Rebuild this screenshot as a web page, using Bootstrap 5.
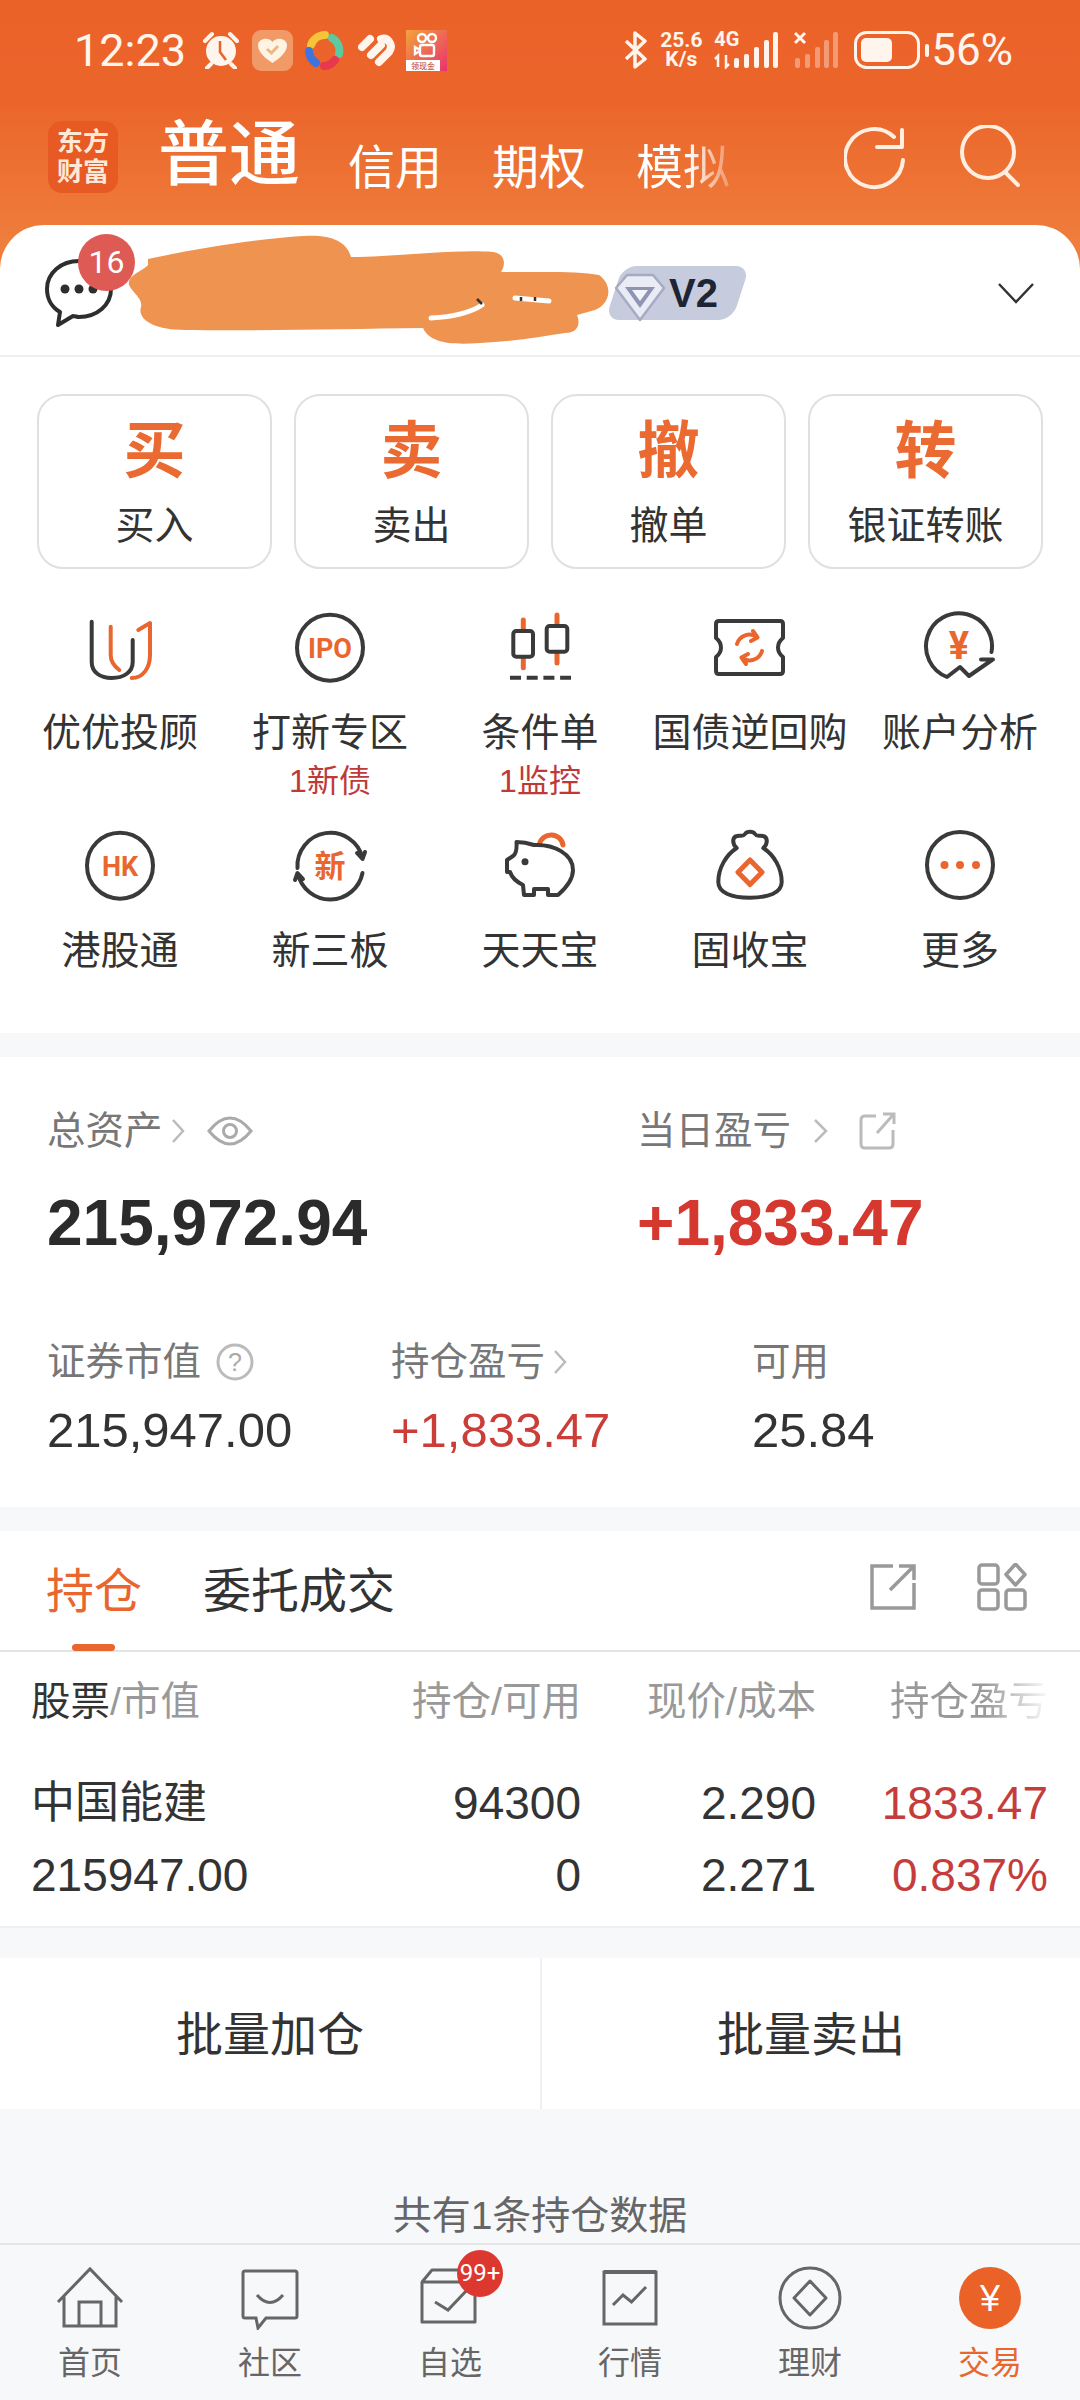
<!doctype html>
<html lang="zh-CN">
<head>
  <meta charset="utf-8">
  <title>东方财富 交易</title>
  <meta name="viewport" content="width=device-width, initial-scale=1">
  <link href="https://cdn.jsdelivr.net/npm/bootstrap@5.3.0/dist/css/bootstrap.min.css" rel="stylesheet">
  <style>
    :root { --brand: #E9672F; --ink: #333; --soft: #777; --faint: #999; --up: #D5382F; --band: #F7F8FA; }
    html, body { width: 1080px; height: 2400px; overflow: hidden; }
    body { background: var(--band); color: var(--ink); font-family: "Liberation Sans", "Noto Sans CJK SC", sans-serif; }
    svg { display: block; flex: none; }
    .ink-line { fill: none; stroke: #3a3a3a; stroke-width: 4; stroke-linecap: round; stroke-linejoin: round; }
    .ink-solid { fill: #fff; }
    .brand-line { fill: none; stroke: var(--brand); stroke-width: 5; stroke-linecap: round; stroke-linejoin: round; }
    .brand-thin { stroke-width: 4; }
    .brand-text { fill: var(--brand); font-family: Roboto, "Noto Sans CJK SC", sans-serif; font-weight: 700; text-anchor: middle; }

    .top-wrap { background: linear-gradient(180deg, #EB6229 0, #EB652B 100px, #EF7D3B 240px); }
    .status-row { height: 100px; padding-left: 74px; padding-right: 67px; color: #FFF5EC; font-family: Roboto, sans-serif; }
    .clock { font-size: 45px; line-height: 1; width: 112px; }
    .speed { font-size: 21px; font-weight: 700; line-height: 19px; text-align: center; width: 50px; }
    .net-wrap { width: 64px; height: 38px; }
    .net-type { left: 0; top: -2px; font-size: 20px; line-height: 20px; font-weight: 700; }
    .pct { font-size: 44px; line-height: 1; margin-left: 2px; }
    .gap-tile { margin-left: 12px; }
    .gap-wheel { margin-left: 11px; }
    .gap-heart { margin-left: 14px; }
    .gap-ks { margin-left: 10px; }
    .nav-row { height: 125px; padding-left: 48px; color: #fff; }
    .logo-tile { width: 70px; height: 72px; margin-top: 21px; border-radius: 14px; background: #E85A24; color: #FFE9D6; font-size: 26px; line-height: 30px; font-weight: 700; text-align: center; padding-top: 6px; }
    .tab-main { font-size: 71px; line-height: 70px; margin: 20px 0 0 40px; font-weight: 500; }
    .tab-sub { font-size: 47px; line-height: 47px; margin: 44px 0 0 50px; }
    .tab-first { margin-left: 48px; }
    .tab-fade { background: linear-gradient(90deg, #fff 55%, rgba(255,255,255,.25) 100%); -webkit-background-clip: text; background-clip: text; color: transparent; }
    .top-actions { margin: 25px 60px 0 auto; gap: 52px; }

    .acct-row { height: 132px; background: #fff; border-radius: 44px 44px 0 0; border-bottom: 2px solid #EEEFF1; padding: 0 45px; }
    .chat-icon { margin-top: 6px; }
    .drop-icon { margin-top: 6px; }
    .msg-dot { top: 9px; left: 78px; width: 57px; height: 57px; background: #DD5A55; color: #fff; font-size: 32px; font-family: Roboto, sans-serif; line-height: 57px; text-align: center; border-radius: 50%; }
    .scribble { top: 0; left: 125px; }
    .vip-tag { position: relative; margin-left: 493px; margin-top: 6px; width: 135px; height: 54px; }
    .vip-bg { background: #C6CCDE; transform: skewX(-18deg); border-radius: 14px; inset: 0 0 0 8px; }
    .vip-gem { left: 8px; top: 6px; }
    .vip-text { left: 63px; top: 5px; font-size: 40px; line-height: 44px; font-weight: 700; color: #1D2433; font-family: "Liberation Sans", sans-serif; }

    .panel-main { background: #fff; height: 676px; padding-top: 37px; }
    .trade-row { padding: 0 37px; gap: 22px; }
    .trade-tile { width: 235px; height: 175px; border: 2px solid #E0E0E0; border-radius: 26px; text-align: center; padding-top: 26px; }
    .trade-big { font-size: 62px; line-height: 60px; font-weight: 700; color: #EA6A31; }
    .trade-label { font-size: 39px; line-height: 42px; margin-top: 23px; color: #333; white-space: nowrap; }
    .shortcut-rows { margin: 41px 15px 0; }
    .shortcut { height: 218px; text-align: center; }
    .shortcut-last { height: 205px; }
    .shortcut-label { font-size: 39px; line-height: 40px; margin-top: 27px; color: #333; white-space: nowrap; }
    .shortcut-note { font-size: 32px; line-height: 36px; margin-top: 10px; color: #BE3A38; }

    .panel-assets { margin-top: 24px; background: #fff; height: 450px; padding: 52px 0 0 47px; }
    .asset-label { font-size: 38.500px; line-height: 44px; color: var(--soft); gap: 7px; }
    .asset-total { font-size: 64px; line-height: 70px; font-weight: 700; margin-top: 35px; color: #2B2B2B; }
    .asset-up { color: var(--up); }
    .asset-col-a { width: 590px; }
    .asset-sub-a { width: 344px; }
    .asset-sub-b { width: 361px; }
    .asset-second { margin-top: 82px; }
    .asset-num { font-size: 49px; line-height: 56px; margin-top: 18px; color: #333; }
    .asset-num.asset-up { color: #CB3D38; }
    .gap-eye { margin-left: 14px; }
    .gap-more { margin-left: 14px; }
    .gap-link { margin-left: 22px; }

    .panel-hold { margin-top: 24px; background: #fff; height: 397px; border-bottom: 2px solid #EEEFF1; }
    .hold-tabs { height: 121px; border-bottom: 2px solid #E4E4E6; padding: 35px 53px 0 46px; position: relative; }
    .hold-tab { font-size: 48px; line-height: 52px; }
    .hold-tab-on { color: var(--brand); margin-right: 61px; }
    .hold-bar { left: 72px; bottom: -1px; width: 43px; height: 7px; border-radius: 4px; background: var(--brand); }
    .hold-tools { gap: 60px; margin-top: -3px; }
    .data-row { padding-left: 31px; }
    .cell-a { width: 300px; }
    .cell-b { width: 250px; text-align: right; }
    .cell-c { width: 235px; text-align: right; }
    .cell-d { width: 232px; text-align: right; }
    .head-row { margin-top: 27px; font-size: 39.500px; line-height: 44px; color: var(--faint); }
    .head-dark { color: #333; }
    .head-fade { background: linear-gradient(90deg, #999 60%, rgba(153,153,153,.05) 100%); -webkit-background-clip: text; background-clip: text; color: transparent; }
    .pos-row { font-size: 46px; line-height: 54px; color: #333; }
    .pos-row-one { margin-top: 53px; }
    .pos-row-two { margin-top: 18px; }
    .pos-name { font-size: 44px; }
    .pos-gain { color: #C43D3C; }

    .bulk-row { margin-top: 30px; height: 151px; background: #fff; }
    .bulk-btn { width: 540px; font-size: 47px; line-height: 154px; text-align: center; color: #333; }
    .bulk-btn + .bulk-btn { border-left: 2px solid #F0F0F2; }
    .count-note { height: 134px; padding-top: 85px; font-size: 39px; line-height: 44px; text-align: center; color: #666; }

    .tabbar { height: 157px; border-top: 2px solid #E4E5E8; background: var(--band); }
    .tabbar-item { width: 180px; padding-top: 21px; text-align: center; color: #666; font-size: 32px; line-height: 36px; position: relative; }
    .tabbar-item svg { margin: 0 auto 15px; }
    .tabbar-on { color: var(--brand); }
    .tabbar-dot { top: 5px; left: 97px; width: 46px; height: 47px; border-radius: 50%; background: #DC382F; color: #fff; font-size: 24px; line-height: 47px; font-family: Roboto, sans-serif; }
  </style>
</head>
<body>
<div class="d-flex flex-column">

  <div class="top-wrap">
    <!-- status bar -->
    <div class="status-row d-flex align-items-center">
      <span class="clock">12:23</span>
      <svg class="ms-3" width="38" height="38" viewBox="0 0 38 38"><path d="M3 10 L10 3 M35 10 L28 3 M9 33 L5 37 M29 33 L33 37" stroke="#FFF5EC" stroke-width="4" stroke-linecap="round"/><circle cx="19" cy="20" r="15" fill="#FFF5EC"/><path d="M18 10 V21 L24 29" fill="none" stroke="#EB632A" stroke-width="2.500"/></svg>
      <svg class="gap-tile" width="41" height="41" viewBox="0 0 41 41"><rect width="41" height="41" rx="9" fill="#F19A67"/><path d="M20.500 33 C8 25 6 19 6 15 C6 9 16 6 20.500 12 C25 6 35 9 35 15 C35 19 33 25 20.500 33Z" fill="#FFF3E4"/><path d="M15 19 L19.500 23 L26 16" fill="none" stroke="#E9B884" stroke-width="3"/></svg>
      <svg class="gap-wheel" width="40" height="40" viewBox="0 0 40 40"><g fill="none" stroke-width="8" stroke-linecap="round"><path d="M7 15 A15 15 0 0 1 21 5" stroke="#F6C438"/><path d="M28 8 A15 15 0 0 1 35 24" stroke="#5CC9A0"/><path d="M31 30 A15 15 0 0 1 20 36" stroke="#E8374F"/><path d="M12 33 A15 15 0 0 1 5 21" stroke="#3F73DE"/></g></svg>
      <svg class="gap-heart" width="38" height="34" viewBox="0 0 38 34"><g fill="none" stroke="#FFF5EC" stroke-width="8" stroke-linecap="round"><path d="M4 14 L12 6"/><path d="M13 22 L23 12"/><path d="M21 29 L31 19 C36 12 30 4 23 6"/></g></svg>
      <svg class="gap-ks" width="41" height="41" viewBox="0 0 41 41"><defs><linearGradient id="ksBg" x1="0" y1="0" x2="1" y2="1"><stop offset="0" stop-color="#F3A33A"/><stop offset="1" stop-color="#E8336E"/></linearGradient></defs><rect width="41" height="41" fill="url(#ksBg)"/><g fill="none" stroke="#fff" stroke-width="2.400"><circle cx="16" cy="8" r="4"/><circle cx="26" cy="8" r="4"/><rect x="14" y="15" width="14" height="11" rx="2"/><path d="M14 20 L9 17 V24 L14 21"/></g><rect y="30" width="34" height="11" fill="#fff"/><text x="17" y="38.500" font-size="8" fill="#B5322A" text-anchor="middle" font-family="Noto Sans CJK SC">领现金</text></svg>

      <svg class="ms-auto" width="24" height="38" viewBox="0 0 24 38"><path d="M2 10 L21 28 L11 36 V2 L21 10 L2 28" fill="none" stroke="#FFF5EC" stroke-width="3.500" stroke-linejoin="round"/></svg>
      <div class="speed ms-2">25.6<br>K/s</div>
      <div class="net-wrap position-relative ms-2">
        <span class="net-type position-absolute">4G</span>
        <svg width="64" height="38" viewBox="0 0 64 38"><path d="M4 36 V25 L1 28 M12 24 V36 L15 33" fill="none" stroke="#FFF5EC" stroke-width="2.500"/><g fill="#FFF5EC"><rect x="20" y="27" width="5" height="10" rx="2"/><rect x="30" y="23" width="5" height="14" rx="2"/><rect x="40" y="16" width="5" height="21" rx="2"/><rect x="50" y="9" width="5" height="28" rx="2"/><rect x="59" y="1" width="5" height="36" rx="2"/></g></svg>
      </div>
      <svg class="ms-3" width="44" height="38" viewBox="0 0 44 38"><path d="M1 2 L11 12 M11 2 L1 12" stroke="#FFF5EC" stroke-width="3"/><g fill="#FFF5EC" opacity=".38"><rect x="1" y="27" width="5" height="10" rx="2"/><rect x="11" y="23" width="5" height="14" rx="2"/><rect x="21" y="16" width="5" height="21" rx="2"/><rect x="30" y="9" width="5" height="28" rx="2"/><rect x="39" y="1" width="5" height="36" rx="2"/></g></svg>
      <svg class="ms-3" width="75" height="38" viewBox="0 0 75 38"><rect x="1.500" y="1.500" width="63" height="35" rx="11" fill="none" stroke="#FFF5EC" stroke-width="3"/><rect x="7" y="7" width="31" height="24" rx="5" fill="#FFF5EC"/><rect x="71" y="13" width="4" height="13" rx="2" fill="#FFF5EC"/></svg>
      <span class="pct">56%</span>
    </div>

    <!-- account type tabs -->
    <div class="nav-row d-flex align-items-start">
      <div class="logo-tile">东方<br>财富</div>
      <span class="tab-main">普通</span>
      <span class="tab-sub tab-first">信用</span>
      <span class="tab-sub">期权</span>
      <span class="tab-sub tab-fade">模拟</span>
      <div class="top-actions d-flex">
        <svg width="62" height="66" viewBox="0 0 62 66"><path d="M50 12 A29 29 0 1 0 59 35" fill="none" stroke="#FFEFE2" stroke-width="4" stroke-linecap="round"/><path d="M33 22 H58 V5" fill="none" stroke="#FFEFE2" stroke-width="4" stroke-linecap="round" stroke-linejoin="round"/></svg>
        <svg width="62" height="66" viewBox="0 0 62 66"><circle cx="30" cy="27" r="26" fill="none" stroke="#FFEFE2" stroke-width="4"/><path d="M47 47 L60 60" stroke="#FFEFE2" stroke-width="4" stroke-linecap="round"/></svg>
      </div>
    </div>

    <!-- account row -->
    <div class="acct-row position-relative d-flex align-items-center">
      <svg class="chat-icon" width="68" height="68" viewBox="0 0 68 68"><path d="M34 2 C16 2 2 14 2 30 C2 41 8 49 15 53 L13 66 L28 57 C30 57 32 58 34 58 C52 58 66 46 66 30 C66 14 52 2 34 2Z" fill="#fff" stroke="#2E2E2E" stroke-width="4" stroke-linejoin="round"/><g fill="#2E2E2E"><circle cx="20" cy="30" r="4.500"/><circle cx="34" cy="30" r="4.500"/><circle cx="48" cy="30" r="4.500"/></g></svg>
      <span class="msg-dot position-absolute">16</span>
      <div class="vip-tag">
        <div class="vip-bg position-absolute"></div>
        <svg class="vip-gem position-absolute" width="52" height="50" viewBox="0 0 52 50"><path d="M13 3 H39 L50 16 L26 48 L2 16Z" fill="#E9ECF5" stroke="#A6ABC4" stroke-width="2.500" stroke-linejoin="round"/><path d="M11 15 H41 L26 36Z" fill="#8F94B3"/><path d="M18 18 H34 L26 29Z" fill="#F2F4FA"/></svg>
        <span class="vip-text position-absolute">V2</span>
      </div>
      <svg class="drop-icon ms-auto" width="38" height="22" viewBox="0 0 38 22"><path d="M2 2 L19 20 L36 2" fill="none" stroke="#333" stroke-width="2.500"/></svg>
      <!-- name scribbled over in the original -->
      <svg class="scribble position-absolute" width="490" height="124" viewBox="0 0 490 124"><path d="M23 34 C70 24 130 14 178 11 C205 9 222 16 226 32 C270 32 330 24 368 27 C382 29 380 42 376 47 C420 47 455 46 474 50 C488 60 486 78 470 85 L452 90 C456 100 452 108 440 108 C415 112 385 117 355 118 C325 120 305 118 298 103 C220 104 130 106 60 105 C30 105 12 95 16 82 C18 74 8 68 4 60 C2 50 18 46 23 40Z" fill="#EF9450"/><path d="M306 93 C325 92 345 88 357 80 M390 73 L424 76" fill="none" stroke="#fff" stroke-width="5" stroke-linecap="round"/><path d="M357 79 L352 74 M396 72 V76 M410 72 V76" fill="none" stroke="#333" stroke-width="2.500"/></svg>
    </div>
  </div>

  <div class="panel-main">
    <div class="trade-row d-flex">
      <div class="trade-tile"><div class="trade-big">买</div><div class="trade-label">买入</div></div>
      <div class="trade-tile"><div class="trade-big">卖</div><div class="trade-label">卖出</div></div>
      <div class="trade-tile"><div class="trade-big">撤</div><div class="trade-label">撤单</div></div>
      <div class="trade-tile"><div class="trade-big">转</div><div class="trade-label">银证转账</div></div>
    </div>

    <div class="shortcut-rows row row-cols-5 g-0">
      <div class="col shortcut">
        <svg class="mx-auto" width="80" height="76" viewBox="0 0 80 76"><path class="ink-line" d="M11.700 11.700 V52 C11.700 62 20 68 31.700 68 C44 68 52.700 62 52.700 52 V30"/><path class="brand-line brand-thin" d="M30.700 16.700 V45 C30.700 51 34 56 39.300 60 M58.300 20 L70 13 V45 C70 58 63 68 51.700 68"/></svg>
        <div class="shortcut-label">优优投顾</div>
      </div>
      <div class="col shortcut">
        <svg class="mx-auto" width="80" height="76" viewBox="0 0 80 76"><circle class="ink-line" cx="40" cy="37.700" r="33"/><text class="brand-text" x="40" y="47.500" font-size="27">IPO</text></svg>
        <div class="shortcut-label">打新专区</div>
        <div class="shortcut-note">1新债</div>
      </div>
      <div class="col shortcut">
        <svg class="mx-auto" width="80" height="76" viewBox="0 0 80 76"><path class="brand-line" d="M23.300 10 V57.700 M57 5 V53"/><rect x="13.300" y="21" width="19.700" height="25.700" rx="3" fill="#fff" stroke="#3a3a3a" stroke-width="4"/><rect x="46.700" y="16" width="20.600" height="25.700" rx="3" fill="#fff" stroke="#3a3a3a" stroke-width="4"/><path d="M10 67.700 H71" fill="none" stroke="#3a3a3a" stroke-width="4" stroke-dasharray="11 5.700"/></svg>
        <div class="shortcut-label">条件单</div>
        <div class="shortcut-note">1监控</div>
      </div>
      <div class="col shortcut">
        <svg class="mx-auto" width="80" height="76" viewBox="0 0 80 76"><path class="ink-line" d="M9 11 H70 Q73 11 73 14 V28 Q68 32 68 37.500 Q68 43 73 47 V61 Q73 64 70 64 H9 Q6 64 6 61 V47 Q11 43 11 37.500 Q11 32 6 28 V14 Q6 11 9 11Z"/><path class="brand-line brand-thin" d="M27 34 A13 13 0 0 1 47 27 M52 41 A13 13 0 0 1 32 48 M43 21 L47.500 27.500 L41 31 M36 54 L31.500 47.500 L38 44"/></svg>
        <div class="shortcut-label">国债逆回购</div>
      </div>
      <div class="col shortcut">
        <svg class="mx-auto" width="80" height="76" viewBox="0 0 80 76"><path class="ink-line" d="M71.500 42 A33 33 0 1 0 27 67 L40 57 L49 66 L72 50 M61 49.500 H73"/><text class="brand-text" x="39" y="49" font-size="38">¥</text></svg>
        <div class="shortcut-label">账户分析</div>
      </div>

      <div class="col shortcut shortcut-last">
        <svg class="mx-auto" width="80" height="76" viewBox="0 0 80 76"><circle class="ink-line" cx="40" cy="37.700" r="33"/><text class="brand-text" x="40" y="47.500" font-size="27">HK</text></svg>
        <div class="shortcut-label">港股通</div>
      </div>
      <div class="col shortcut shortcut-last">
        <svg class="mx-auto" width="80" height="76" viewBox="0 0 80 76"><path class="ink-line" d="M7.500 40 A33 33 0 0 1 72.500 30 M72.500 45 A33 33 0 0 1 8 46 M67 25 L72.500 31 L75 24 M13 51 L7.500 45 L5 52"/><text class="brand-text" x="40" y="49" font-size="31">新</text></svg>
        <div class="shortcut-label">新三板</div>
      </div>
      <div class="col shortcut shortcut-last">
        <svg class="mx-auto" width="80" height="76" viewBox="0 0 80 76"><path class="brand-line" d="M39.500 16 A12 12 0 0 1 63 17"/><path class="ink-line ink-solid" d="M16.500 14 C22 14 28 15 34 17 C54 16 73 26 73 42 C73 52 66 60 58 67 H48 V61 H34 V67 H24 L23 57 C17 54 12 50 10 44 H7 V32 L13 28 C16 26 17 22 16.500 14Z"/><circle cx="25" cy="33.700" r="3.500" fill="#3a3a3a"/></svg>
        <div class="shortcut-label">天天宝</div>
      </div>
      <div class="col shortcut shortcut-last">
        <svg class="mx-auto" width="80" height="76" viewBox="0 0 80 76"><path class="ink-line" d="M26.700 20 C16 27 8.300 40 8.300 54 C8.300 65 22 69.700 40 69.700 C58 69.700 71.700 65 71.700 54 C71.700 40 64 27 53.300 20 C58 16 58 9 53 8 C49 7 47 9 45 6 C43 3 37 3 35 6 C33 9 31 7 27 8 C22 9 22 16 26.700 20Z"/><polygon class="brand-line" points="40,32 52,44.300 40,56.600 28,44.300"/></svg>
        <div class="shortcut-label">固收宝</div>
      </div>
      <div class="col shortcut shortcut-last">
        <svg class="mx-auto" width="80" height="76" viewBox="0 0 80 76"><circle class="ink-line" cx="40" cy="37" r="33"/><g fill="#E9672F"><circle cx="24.500" cy="37" r="4"/><circle cx="40" cy="37" r="4"/><circle cx="56" cy="37" r="4"/></g></svg>
        <div class="shortcut-label">更多</div>
      </div>
    </div>
  </div>

  <div class="panel-assets">
    <div class="d-flex">
      <div class="asset-col-a">
        <div class="asset-label d-flex align-items-center">总资产
          <svg width="16" height="28" viewBox="0 0 16 28"><path d="M3 3 L13 14 L3 25" fill="none" stroke="#BBB" stroke-width="2.500"/></svg>
          <svg class="gap-eye" width="46" height="32" viewBox="0 0 46 32"><path d="M2 16 Q23 -10 44 16 Q23 42 2 16Z" fill="none" stroke="#AAA" stroke-width="3"/><circle cx="23" cy="16" r="6.500" fill="none" stroke="#AAA" stroke-width="3"/></svg>
        </div>
        <div class="asset-total">215,972.94</div>
      </div>
      <div>
        <div class="asset-label d-flex align-items-center">当日盈亏
          <svg class="gap-more" width="18" height="28" viewBox="0 0 18 28"><path d="M3 3 L14 14 L3 25" fill="none" stroke="#BBB" stroke-width="2.500"/></svg>
          <svg class="gap-link" width="38" height="38" viewBox="0 0 38 38"><path d="M17 4 H6 Q2 4 2 8 V32 Q2 36 6 36 H30 Q34 36 34 32 V18 M18 21 L34 3 M24 2 H35 V12" fill="none" stroke="#BBB" stroke-width="3"/></svg>
        </div>
        <div class="asset-total asset-up">+1,833.47</div>
      </div>
    </div>
    <div class="d-flex asset-second">
      <div class="asset-sub-a">
        <div class="asset-label d-flex align-items-center">证券市值
          <svg class="ms-2" width="38" height="38" viewBox="0 0 38 38"><circle cx="19" cy="19" r="17" fill="none" stroke="#BBB" stroke-width="3"/><text x="19" y="28" font-size="25" fill="#AAA" text-anchor="middle" font-family="Liberation Sans">?</text></svg>
        </div>
        <div class="asset-num">215,947.00</div>
      </div>
      <div class="asset-sub-b">
        <div class="asset-label d-flex align-items-center">持仓盈亏
          <svg width="16" height="28" viewBox="0 0 16 28"><path d="M3 3 L13 14 L3 25" fill="none" stroke="#BBB" stroke-width="2.500"/></svg>
        </div>
        <div class="asset-num asset-up">+1,833.47</div>
      </div>
      <div>
        <div class="asset-label">可用</div>
        <div class="asset-num">25.84</div>
      </div>
    </div>
  </div>

  <div class="panel-hold">
    <div class="hold-tabs d-flex align-items-start">
      <span class="hold-tab hold-tab-on">持仓</span>
      <span class="hold-tab">委托成交</span>
      <div class="hold-tools d-flex ms-auto">
        <svg width="48" height="48" viewBox="0 0 48 48"><path d="M24 3 H3 V45 H45 V20 M21 27 L44 4 M30 3 H45 V17" fill="none" stroke="#999" stroke-width="3.500"/></svg>
        <svg width="50" height="48" viewBox="0 0 50 48"><g fill="none" stroke="#999" stroke-width="3.500"><rect x="2" y="2" width="19" height="19" rx="3"/><rect x="2" y="27" width="19" height="19" rx="3"/><rect x="29" y="27" width="19" height="19" rx="3"/><path d="M38.500 1 L48 11.500 L38.500 22 L29 11.500Z" stroke-linejoin="round"/></g></svg>
      </div>
      <div class="hold-bar position-absolute"></div>
    </div>
    <div class="data-row head-row d-flex">
      <div class="cell-a"><span class="head-dark">股票</span>/市值</div>
      <div class="cell-b">持仓/可用</div>
      <div class="cell-c">现价/成本</div>
      <div class="cell-d"><span class="head-fade">持仓盈亏</span></div>
    </div>
    <div class="data-row pos-row pos-row-one d-flex">
      <div class="cell-a pos-name">中国能建</div>
      <div class="cell-b">94300</div>
      <div class="cell-c">2.290</div>
      <div class="cell-d pos-gain">1833.47</div>
    </div>
    <div class="data-row pos-row pos-row-two d-flex">
      <div class="cell-a">215947.00</div>
      <div class="cell-b">0</div>
      <div class="cell-c">2.271</div>
      <div class="cell-d pos-gain">0.837%</div>
    </div>
  </div>

  <div class="bulk-row d-flex">
    <div class="bulk-btn">批量加仓</div>
    <div class="bulk-btn">批量卖出</div>
  </div>

  <div class="count-note">共有1条持仓数据</div>

  <nav class="tabbar d-flex">
    <div class="tabbar-item">
      <svg width="76" height="64" viewBox="0 0 76 64"><path d="M6 36 L38 3 L70 36 M12 29 V60 H64 V29 M27 60 V36 H49 V60" fill="none" stroke="#666" stroke-width="3"/></svg>首页
    </div>
    <div class="tabbar-item">
      <svg width="76" height="64" viewBox="0 0 76 64"><path d="M13 5 H63 Q65 5 65 7 V50 Q65 52 63 52 H34 L26 62 L24 52 H13 Q11 52 11 50 V7 Q11 5 13 5Z" fill="none" stroke="#666" stroke-width="3"/><path d="M25 29 Q38 44 51 29" fill="none" stroke="#666" stroke-width="3"/></svg>社区
    </div>
    <div class="tabbar-item">
      <svg width="76" height="64" viewBox="0 0 76 64"><path d="M10 16 L20 4 H60 M10 16 H63 V56 H10Z" fill="none" stroke="#666" stroke-width="3" stroke-linejoin="round"/><path d="M23 36 L36 44 L55 24" fill="none" stroke="#666" stroke-width="3"/></svg>自选
      <span class="tabbar-dot position-absolute">99+</span>
    </div>
    <div class="tabbar-item">
      <svg width="76" height="64" viewBox="0 0 76 64"><path d="M12 6 H64 V58 H12Z" fill="none" stroke="#666" stroke-width="3"/><path d="M12 6 H64" stroke="#666" stroke-width="4"/><path d="M21 39 L31 29 L39.500 36 L54 21" fill="none" stroke="#666" stroke-width="3"/></svg>行情
    </div>
    <div class="tabbar-item">
      <svg width="76" height="64" viewBox="0 0 76 64"><circle cx="38" cy="32" r="30" fill="none" stroke="#666" stroke-width="3"/><path d="M38 15 L54 32 L38 49 L22 32Z" fill="none" stroke="#666" stroke-width="3" stroke-linejoin="round"/></svg>理财
    </div>
    <div class="tabbar-item tabbar-on">
      <svg width="76" height="64" viewBox="0 0 76 64"><circle cx="38" cy="32" r="31" fill="#EB6228"/><text x="38" y="45" font-size="36" fill="#fff" text-anchor="middle" font-family="Liberation Sans">¥</text></svg>交易
    </div>
  </nav>
</div>
<script src="https://cdn.jsdelivr.net/npm/bootstrap@5.3.0/dist/js/bootstrap.bundle.min.js"></script>
</body>
</html>
